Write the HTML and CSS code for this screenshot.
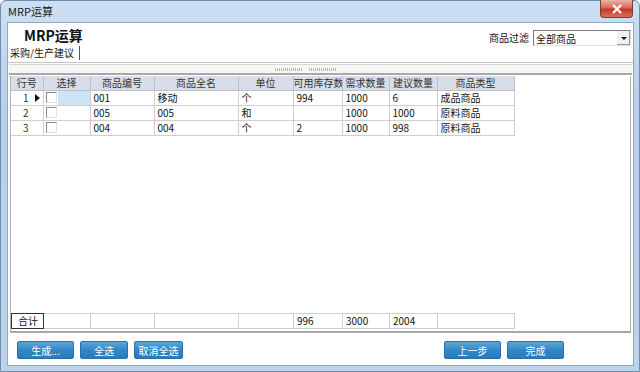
FILE: index.html
```html
<!DOCTYPE html>
<html lang="zh">
<head>
    <meta charset="UTF-8">
    <title>MRP运算</title>
    <link rel="stylesheet" href="styles.css">
</head>
<body>

    <div class="window">
        <div class="titlebar">
            <span class="title">MRP运算</span>
            <div class="close">
                <svg width="12" height="10" viewBox="0 0 12 10"><path d="M2 1 L10 9 M10 1 L2 9" stroke="#fff" stroke-width="2.2"/></svg>
            </div>
        </div>

        <div class="client">
            <div class="head">
                <div class="head-left">
                    <h1>MRP运算</h1>
                    <div class="tab">采购/生产建议</div>
                </div>
                <div class="filter">
                    <span>商品过滤</span>
                    <div class="select">
                        <span>全部商品</span>
                        <div class="drop"><span class="down"></span></div>
                    </div>
                </div>
            </div>

            <div class="panel">
                <div class="splitter">
                    <span class="grip"></span>
                    <span class="grip"></span>
                </div>
                <div class="grid">
                    <table class="rows">
                        <colgroup>
                            <col style="width:32px"><col style="width:47px"><col style="width:64px">
                            <col style="width:84px"><col style="width:55px"><col style="width:49px">
                            <col style="width:47px"><col style="width:48px"><col style="width:77px">
                        </colgroup>
                        <tr class="hdr">
                            <th>行号</th><th>选择</th><th>商品编号</th><th>商品全名</th><th>单位</th>
                            <th class="clip">可用库存数</th><th>需求数量</th><th>建议数量</th><th>商品类型</th>
                        </tr>
                        <tr>
                            <td class="num">1<span class="cur"></span></td>
                            <td class="sel"><span class="chk"></span><span class="hl"></span></td>
                            <td>001</td><td>移动</td><td>个</td><td>994</td><td>1000</td><td>6</td><td>成品商品</td>
                        </tr>
                        <tr>
                            <td class="num">2</td>
                            <td class="sel"><span class="chk"></span></td>
                            <td>005</td><td>005</td><td>和</td><td></td><td>1000</td><td>1000</td><td>原料商品</td>
                        </tr>
                        <tr>
                            <td class="num">3</td>
                            <td class="sel"><span class="chk"></span></td>
                            <td>004</td><td>004</td><td>个</td><td>2</td><td>1000</td><td>998</td><td>原料商品</td>
                        </tr>
                    </table>

                    <table class="rows total">
                        <colgroup>
                            <col style="width:32px"><col style="width:47px"><col style="width:64px">
                            <col style="width:84px"><col style="width:55px"><col style="width:49px">
                            <col style="width:47px"><col style="width:48px"><col style="width:77px">
                        </colgroup>
                        <tr>
                            <td class="sum">合计</td><td></td><td></td><td></td><td></td>
                            <td>996</td><td>3000</td><td>2004</td><td></td>
                        </tr>
                    </table>
                </div>
            </div>

            <div class="buttons">
                <div class="group">
                    <button class="btn w56">生成...</button>
                    <button class="btn w48">全选</button>
                    <button class="btn w49">取消全选</button>
                </div>
                <div class="group">
                    <button class="btn w56">上一步</button>
                    <button class="btn w56">完成</button>
                </div>
            </div>
        </div>
    </div>

</body>
</html>
```

FILE: styles.css
```css
body {
    margin: 0;
    font-family: "Noto Sans CJK SC", "Liberation Sans", sans-serif;
    font-size: 10px;
    color: #111;
}
.window {
    width: 640px;
    height: 372px;
    box-sizing: border-box;
    display: flex;
    flex-direction: column;
    background: linear-gradient(#cde0f3, #b8cfe8 30%, #bdd3ea);
    border: 1px solid #6d8db3;
    border-radius: 6px 6px 0 0;
}
.titlebar {
    height: 21px;
    display: flex;
    align-items: flex-start;
    padding-left: 7px;
}
.title {
    font-size: 11px;
    line-height: 20px;
    color: #1a1a1a;
}
.close {
    margin-left: auto;
    margin-right: 6px;
    width: 33px;
    height: 18px;
    margin-top: -1px;
    display: flex;
    align-items: center;
    justify-content: center;
    background: linear-gradient(#eab3a6, #d46c5c 45%, #c0392b 55%, #d9705a);
    border: 1px solid #7d3a32;
    border-top: none;
    border-radius: 0 0 4px 4px;
    box-sizing: border-box;
}
.client {
    flex: 1;
    margin: 0 5px 5px 6px;
    background: #fff;
    border: 1px solid #8fa8c6;
    display: flex;
    flex-direction: column;
}
.head {
    height: 39px;
    display: flex;
    justify-content: space-between;
    border-bottom: 1px solid #c4c4c4;
}
.head-left h1 {
    margin: 4px 0 0 16px;
    font-size: 14px;
    line-height: 17px;
    font-weight: 600;
}
.tab {
    display: inline-block;
    margin: 2px 0 0 2px;
    padding-right: 5px;
    line-height: 14px;
    border-right: 1px solid #555;
    font-size: 10px;
}
.filter {
    display: flex;
    align-items: flex-start;
    gap: 4px;
    padding-top: 7px;
}
.filter > span {
    line-height: 16px;
}
.select {
    width: 98px;
    height: 16px;
    box-sizing: border-box;
    border: 1px solid #7a7a7a;
    border-right-color: #ddd;
    border-bottom-color: #ddd;
    display: flex;
    align-items: center;
    padding-left: 2px;
    margin-right: 2px;
}
.select span {
    flex: 1;
}
.drop {
    width: 13px;
    height: 14px;
    display: flex;
    align-items: center;
    justify-content: center;
    background: #f0f0f0;
    border-left: 1px solid #fff;
    box-shadow: inset -1px -1px 0 #999;
}
.select .down {
    flex: none;
    width: 0;
    height: 0;
    border-left: 3px solid transparent;
    border-right: 3px solid transparent;
    border-top: 3px solid #111;
}
.panel {
    flex: 1;
    margin: 1px 1px 0 1px;
    display: flex;
    flex-direction: column;
}
.splitter {
    height: 8px;
    border-top: 1px solid #d6d6d6;
    background: #f7f7f7;
    border-bottom: 2px solid #a8a8a8;
    display: flex;
    justify-content: center;
    align-items: center;
    gap: 6px;
    padding-right: 30px;
}
.grip {
    width: 28px;
    height: 3px;
    background: repeating-linear-gradient(90deg, #b5b5b5 0 1px, transparent 1px 2px);
}
.grid {
    flex: 1;
    margin: 1px 1px 0 1px;
    border-left: 1px solid #b0b0b0;
    border-right: 1px solid #b0b0b0;
    border-bottom: 2px solid #a8a8a8;
    display: flex;
    flex-direction: column;
}
.rows {
    border-collapse: collapse;
    table-layout: fixed;
    width: 503px;
}
.rows td, .rows th {
    height: 14px;
    padding: 0 0 0 3px;
    border: 1px solid #cfcfcf;
    border-top: none;
    line-height: 14px;
    white-space: nowrap;
    overflow: hidden;
    text-align: left;
    font-weight: normal;
    font-size: 10px;
}
.rows tr > :first-child {
    border-left: none;
}
.hdr th {
    text-align: center;
    padding: 0;
    background: #d8dee8;
    border-color: #eef1f5 #b9c1cd #b9c1cd #eef1f5;
    color: #333;
}
.hdr th.clip {
    text-align: left;
}
.num {
    position: relative;
    text-align: left;
}
.rows td.num {
    padding-left: 12px;
    color: #333;
}
.cur {
    position: absolute;
    left: 24px;
    top: 3px;
    width: 0;
    height: 0;
    border-top: 4px solid transparent;
    border-bottom: 4px solid transparent;
    border-left: 5px solid #111;
}
.rows td.sel {
    position: relative;
    padding-left: 2px;
}
.chk {
    display: inline-block;
    width: 9px;
    height: 9px;
    vertical-align: -1px;
    border: 1px solid #8a8a8a;
    border-right-color: #e0e0e0;
    border-bottom-color: #e0e0e0;
    background: #fff;
}
.hl {
    position: absolute;
    left: 14px;
    right: 0;
    top: 0;
    bottom: 0;
    background: #cde3f6;
}
.total {
    margin-top: auto;
    margin-bottom: 2px;
}
.total td {
    border-top: 1px solid #cfcfcf;
}
.rows td.sum {
    border: 1px solid #333;
    padding-left: 6px;
}
.buttons {
    height: 32px;
    display: flex;
    padding: 8px 69px 0 9px;
    box-sizing: border-box;
    justify-content: space-between;
    align-items: flex-start;
}
.group {
    display: flex;
    gap: 6px;
}
.btn {
    height: 18px;
    padding: 0;
    font-family: "Noto Sans CJK SC", "Liberation Sans", sans-serif;
    font-size: 10px;
    color: #fff;
    background: linear-gradient(#5aa6dc, #3287c6 50%, #2a7bbb);
    border: 1px solid #2c6fa6;
    border-radius: 2px;
}
.w56 { width: 57px; }
.w48 { width: 48px; }
.w49 { width: 49px; }
```
